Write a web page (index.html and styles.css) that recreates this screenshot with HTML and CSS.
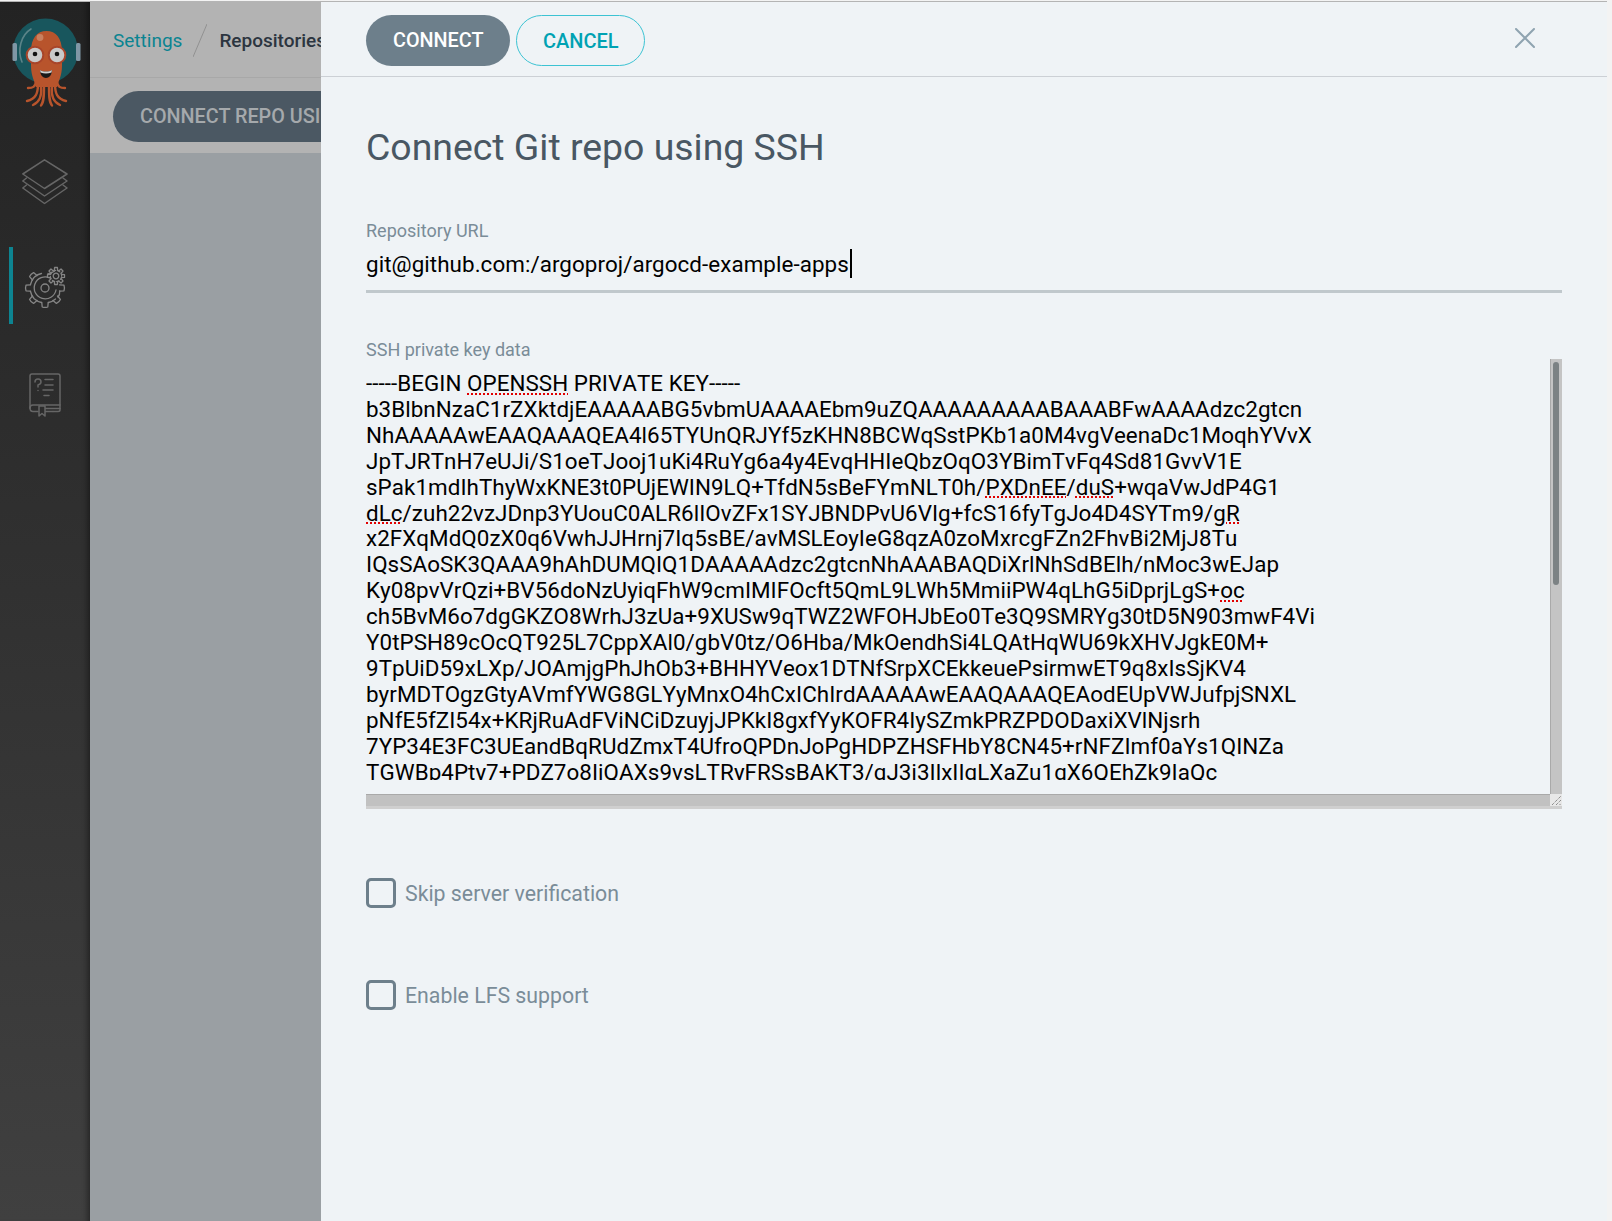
FILE: index.html
```html
<!DOCTYPE html>
<html lang="en">
<head>
<meta charset="utf-8">
<title>Settings - Repositories</title>
<link rel="stylesheet" href="styles.css">
</head>
<body>
<div class="app">
  <aside class="sidebar">
    <svg class="logo" viewBox="0 2 90 112" width="90" height="112">
      <circle cx="45.5" cy="51" r="32.500" fill="#18565d"/>
      <path d="M31 29 C21 35 17 50 22 62" fill="none" stroke="#5b8488" stroke-width="1.600" stroke-linecap="round"/>
      <rect x="12.500" y="43" width="4.500" height="18" rx="1.500" fill="#7f97a6"/>
      <rect x="76" y="43" width="4.500" height="18" rx="1.500" fill="#7f97a6"/>
      <g fill="none" stroke="#b8542c" stroke-width="2.400" stroke-linecap="round">
        <path d="M36 82 C35 87 33 88 28 88"/>
        <path d="M38 84 C38 93 36 99 27 101"/>
        <path d="M41 86 C42 95 40 102 33 105"/>
        <path d="M44 86 C44 95 44 102 41 105.500"/>
        <path d="M49 86 C49 95 49 102 52 105.500"/>
        <path d="M52 86 C51 95 53 102 60 105"/>
        <path d="M55 84 C55 93 57 99 66 101"/>
        <path d="M57 82 C58 87 60 88 65 88"/>
      </g>
      <path d="M31 52 C31 38 37 31 46.500 31 C56 31 62 38 62 52 L62 66 C62 76 58 82 57 87 L36 87 C35 82 31 76 31 66 Z" fill="#b8542c"/>
      <circle cx="40" cy="37.500" r="3.400" fill="#c9805f"/>
      <circle cx="35" cy="55" r="8.300" fill="#c9c9c9" stroke="#a8452a" stroke-width="2"/>
      <circle cx="57" cy="55" r="8.300" fill="#c9c9c9" stroke="#a8452a" stroke-width="2"/>
      <circle cx="35" cy="54" r="2.300" fill="#111"/>
      <circle cx="57" cy="54" r="2.300" fill="#111"/>
      <path d="M40 70 C43 72 49 72 52 70 C52 75 49 78 46 78 C43 78 40 75 40 70 Z" fill="#191919"/>
      <path d="M40 70 C43 72 49 72 52 70 L51.500 72.400 C48 73.800 44 73.800 40.500 72.400 Z" fill="#cfcfcf"/>
    </svg>
    <nav class="nav">
      <div class="nav-item nav-stack">
        <svg viewBox="0 0 46 46" width="46" height="46" fill="none" stroke="#666" stroke-width="1.500" stroke-linejoin="round" stroke-linecap="round">
          <path d="M22.500 .8 L45 15 L22.500 29.500 L.8 15 Z"/>
          <path d="M4.500 19 L.8 22 L22.500 37 L45 22 L41 19"/>
          <path d="M4.500 26 L.8 29 L22.500 44.500 L45 29 L41 26"/>
        </svg>
      </div>
      <div class="nav-item nav-active">
        <svg viewBox="0 0 44 44" width="44" height="44" fill="none" stroke="#858585" stroke-width="1.300" stroke-linecap="round" stroke-linejoin="round">
          <defs>
            <path id="tooth" d="M-3.200 -14.500 L-2.800 -19 Q0 -20 2.800 -19 L3.200 -14.500"/>
            <path id="mini" d="M-1.700 -5.500 L-1.400 -8.500 H1.400 L1.700 -5.500"/>
          </defs>
          <g transform="translate(21 24)">
            <circle r="4"/>
            <path d="M5 -10 A11 11 0 1 0 11 2"/>
            <path d="M9.500 -17 Q4 -13.500 3 -14.500 M14.700 3 Q15 7 13 9"/>
            <use href="#tooth" transform="rotate(-45)"/>
            <use href="#tooth" transform="rotate(-90)"/>
            <use href="#tooth" transform="rotate(-135)"/>
            <use href="#tooth" transform="rotate(180)"/>
            <use href="#tooth" transform="rotate(135)"/>
            <use href="#tooth" transform="rotate(90)"/>
            <path d="M-11 -10.500 A15 15 0 0 0 -14.500 -3.500 M-14.500 3.500 A15 15 0 0 0 -11 10.500 M-10.500 11 A15 15 0 0 0 -3.500 14.500 M3.500 14.500 A15 15 0 0 0 10.500 11 M-3.500 -14.500 A15 15 0 0 0 -10.500 -11"/>
          </g>
          <g transform="translate(32 12)">
            <circle r="2.800"/>
            <use href="#mini"/>
            <use href="#mini" transform="rotate(45)"/>
            <use href="#mini" transform="rotate(90)"/>
            <use href="#mini" transform="rotate(135)"/>
            <use href="#mini" transform="rotate(180)"/>
            <use href="#mini" transform="rotate(225)"/>
            <use href="#mini" transform="rotate(270)"/>
            <use href="#mini" transform="rotate(315)"/>
            <circle r="5.700" stroke-dasharray="2.400 2.070" stroke-dashoffset="3.300"/>
          </g>
        </svg>
      </div>
      <div class="nav-item nav-book">
        <svg viewBox="0 0 32 44" width="32" height="44" fill="none" stroke="#666" stroke-width="1.500" stroke-linecap="round" stroke-linejoin="round">
          <path d="M1 35 V3 Q1 1 3 1 H29 Q31 1 31 3 V37 Q31 38.500 29 38.500 H24"/>
          <path d="M1 35 Q1 38.500 4 38.500 H9"/>
          <path d="M1 35 Q1 32 4 32 H31"/>
          <path d="M10 33 V43 L13 40.500 L16 43 V38.500 H24 M16 35.500 H31 M10 33 H16 V38.500"/>
          <path d="M6 9 Q6 6 9 6 Q12 6 12 9 Q12 11 9 12 V14 M9 17.500 V17.600"/>
          <path d="M16 6.500 H24 M16 12 H24 M14 17 H24 M15 22.500 H20"/>
        </svg>
      </div>
    </nav>
  </aside>
  <main class="main">
    <header class="topbar">
      <a class="crumb">Settings</a>
      <svg class="crumb-sep" viewBox="0 0 14 33" width="14" height="33" fill="none" stroke="#919191" stroke-width="1"><path d="M14 0 L0 33"/></svg>
      <span class="crumb-current">Repositories</span>
    </header>
    <div class="toolbar">
      <span class="btn btn-dim">CONNECT REPO USING SSH</span>
    </div>
    <div class="content"></div>
  </main>
  <section class="panel">
    <header class="panel-head">
      <span class="btn btn-primary">CONNECT</span>
      <span class="btn btn-outline">CANCEL</span>
      <svg class="close" viewBox="0 0 20 20" width="20" height="20" fill="none" stroke="#8fa3b0" stroke-width="2" stroke-linecap="round"><path d="M1 1 L19 19 M19 1 L1 19"/></svg>
    </header>
    <div class="panel-body">
      <h2 class="title">Connect Git repo using SSH</h2>
      <div class="field field-url">
        <label class="label">Repository URL</label>
        <div class="input">git@github.com:/argoproj/argocd-example-apps<span class="caret"></span></div>
      </div>
      <div class="field field-key">
        <label class="label">SSH private key data</label>
        <div class="textarea">
          <div class="key-text">
            <div class="key-line">-----BEGIN <span class="spell">OPENSSH</span> PRIVATE KEY-----</div>
            <div class="key-line">b3BlbnNzaC1rZXktdjEAAAAABG5vbmUAAAAEbm9uZQAAAAAAAAABAAABFwAAAAdzc2gtcn</div>
            <div class="key-line">NhAAAAAwEAAQAAAQEA4l65TYUnQRJYf5zKHN8BCWqSstPKb1a0M4vgVeenaDc1MoqhYVvX</div>
            <div class="key-line">JpTJRTnH7eUJi/S1oeTJooj1uKi4RuYg6a4y4EvqHHIeQbzOqO3YBimTvFq4Sd81GvvV1E</div>
            <div class="key-line">sPak1mdIhThyWxKNE3t0PUjEWIN9LQ+TfdN5sBeFYmNLT0h/<span class="spell">PXDnEE</span>/<span class="spell">duS</span>+wqaVwJdP4G1</div>
            <div class="key-line"><span class="spell">dLc</span>/zuh22vzJDnp3YUouC0ALR6lIOvZFx1SYJBNDPvU6VIg+fcS16fyTgJo4D4SYTm9/<span class="spell">gR</span></div>
            <div class="key-line">x2FXqMdQ0zX0q6VwhJJHrnj7Iq5sBE/avMSLEoyIeG8qzA0zoMxrcgFZn2FhvBi2MjJ8Tu</div>
            <div class="key-line">IQsSAoSK3QAAA9hAhDUMQIQ1DAAAAAdzc2gtcnNhAAABAQDiXrlNhSdBElh/nMoc3wEJap</div>
            <div class="key-line">Ky08pvVrQzi+BV56doNzUyiqFhW9cmIMIFOcft5QmL9LWh5MmiiPW4qLhG5iDprjLgS+<span class="spell">oc</span></div>
            <div class="key-line">ch5BvM6o7dgGKZO8WrhJ3zUa+9XUSw9qTWZ2WFOHJbEo0Te3Q9SMRYg30tD5N903mwF4Vi</div>
            <div class="key-line">Y0tPSH89cOcQT925L7CppXAl0/gbV0tz/O6Hba/MkOendhSi4LQAtHqWU69kXHVJgkE0M+</div>
            <div class="key-line">9TpUiD59xLXp/JOAmjgPhJhOb3+BHHYVeox1DTNfSrpXCEkkeuePsirmwET9q8xIsSjKV4</div>
            <div class="key-line">byrMDTOgzGtyAVmfYWG8GLYyMnxO4hCxIChIrdAAAAAwEAAQAAAQEAodEUpVWJufpjSNXL</div>
            <div class="key-line">pNfE5fZI54x+KRjRuAdFViNCiDzuyjJPKkI8gxfYyKOFR4IySZmkPRZPDODaxiXVlNjsrh</div>
            <div class="key-line">7YP34E3FC3UEandBqRUdZmxT4UfroQPDnJoPgHDPZHSFHbY8CN45+rNFZImf0aYs1QINZa</div>
            <div class="key-line">TGWBp4Pty7+PDZ7o8IiQAXs9vsLTRyFRSsBAKT3/gJ3j3IlxIIgLXaZu1gX6QEhZk9IaQc</div>
          </div>
          <div class="vscroll"><div class="vthumb"></div></div>
          <div class="hscroll"></div>
          <div class="resizer">
            <svg viewBox="0 0 12 12" width="12" height="12" fill="none" stroke="#666" stroke-width="1" stroke-dasharray="1 1"><path d="M2 11 L11 2 M6 11 L11 6 M9.500 11 L11 9.500"/></svg>
          </div>
        </div>
      </div>
      <div class="check-row check-first">
        <span class="checkbox"></span>
        <span class="check-label">Skip server verification</span>
      </div>
      <div class="check-row check-second">
        <span class="checkbox"></span>
        <span class="check-label">Enable LFS support</span>
      </div>
    </div>
  </section>
</div>
</body>
</html>
```
FILE: styles.css
```css
* { box-sizing: border-box; }
html, body { height: 100%; }
body {
  margin: 0;
  height: 1221px;
  overflow: hidden;
  font-family: Roboto, "Liberation Sans", sans-serif;
  background: #f3f3f3;
  padding: 1px 5px 0 0;
}
.app {
  position: relative;
  display: flex;
  height: 1220px;
  overflow: hidden;
  border-top: 1px solid #b4b4b4;
}
.sidebar {
  width: 90px;
  flex: none;
  background: linear-gradient(#232323, #404040);
  box-shadow: inset -7px 0 6px -5px rgba(0, 0, 0, .45);
}
.logo { display: block; }
.nav { display: flex; flex-direction: column; }
.nav-item { display: flex; justify-content: center; }
.nav-stack { margin-top: 45px; height: 47px; }
.nav-active {
  margin: 41px 0 0 9px;
  width: 81px;
  height: 77px;
  border-left: 4px solid #0d8491;
  align-items: center;
  justify-content: flex-start;
  padding-left: 11px;
}
.nav-book { margin-top: 49px; }

.main { flex: 1; min-width: 0; display: flex; flex-direction: column; background: #9a9fa3; }
.topbar {
  height: 76px;
  flex: none;
  display: flex;
  align-items: center;
  background: #b3b3b3;
  border-bottom: 1px solid #a8a8a8;
  padding: 1px 0 0 23px;
  font-size: 19px;
}
.crumb { color: #0a8491; }
.crumb-sep { margin: 0 12px 0 11px; flex: none; }
.crumb-current { color: #2c3540; font-weight: 500; white-space: nowrap; }
.toolbar {
  height: 75px;
  flex: none;
  background: #b3b3b3;
  padding: 13px 0 0 23px;
  white-space: nowrap;
}
.content { flex: 1; }

.btn {
  display: inline-flex;
  align-items: center;
  height: 51px;
  border-radius: 26px;
  font-size: 20px;
  font-weight: 500;
  white-space: nowrap;
}
.btn-dim { background: #4b5863; color: #a5a9ac; padding: 0 27px; font-size: 19.800px; }
.btn-primary { background: #6d7f8b; color: #fff; padding: 0 27px; font-size: 19.800px; }
.btn-outline { color: #00a2b3; border: 1px solid #3cc3d3; padding: 0 25.500px; margin-left: 6px; }

.panel {
  position: absolute;
  top: 0;
  left: 321px;
  right: 0;
  bottom: 0;
  background: #eff3f6;
  color: #000;
}
.panel-head {
  height: 75px;
  display: flex;
  align-items: flex-start;
  padding: 13px 0 0 45px;
  border-bottom: 1px solid #ccd0d5;
}
.close { margin: 13px 72px 0 auto; }
.panel-body { padding: 0 45px; }
.title {
  margin: 0;
  padding-top: 48px;
  font-size: 37.400px;
  line-height: 44px;
  font-weight: 400;
  color: #495763;
}
.label { display: block; color: #7a8c98; font-size: 18px; line-height: 22px; }
.field-url { margin-top: 51px; }
.input {
  margin-top: 7px;
  height: 44px;
  font-size: 22.400px;
  letter-spacing: .06px;
  line-height: 30px;
  border-bottom: 3px solid #c0c8cc;
  white-space: nowrap;
}
.caret {
  display: inline-block;
  width: 2px;
  height: 29px;
  background: #000;
  vertical-align: top;
  margin-left: 1px;
}
.field-key { margin-top: 46px; }
.textarea {
  display: grid;
  grid-template-columns: 1fr 12px;
  grid-template-rows: 435px 12px;
  border-bottom: 3px solid #cfcfcf;
  margin-top: -2px;
}
.key-text {
  font-size: 22.400px;
  letter-spacing: .05px;
  font-kerning: none;
  line-height: 25.900px;
  padding-top: 12px;
  overflow: hidden;
  height: 421px;
  white-space: nowrap;
  color: #000;
}
.spell { text-decoration: underline dotted #e00000 2px; text-underline-offset: 2px; }
.vscroll {
  background: #c4c4c4;
  box-shadow: inset 1px 0 0 #a9a9a9;
  padding: 3px 3px 0;
}
.vthumb { height: 223px; background: #7c8284; border-radius: 3px; }
.hscroll { background: #c1c1c1; box-shadow: inset 0 1px 0 #a9a9a9; }
.resizer { background: #e8e8e8; }
.resizer svg { display: block; }

.check-row { display: flex; align-items: center; gap: 9px; height: 30px; }
.check-first { margin-top: 69px; }
.check-second { margin-top: 72px; }
.checkbox {
  width: 30px;
  height: 30px;
  border: 3px solid #6d7f8b;
  border-radius: 5px;
}
.check-label { color: #7a8c98; font-size: 21.300px; }
```
